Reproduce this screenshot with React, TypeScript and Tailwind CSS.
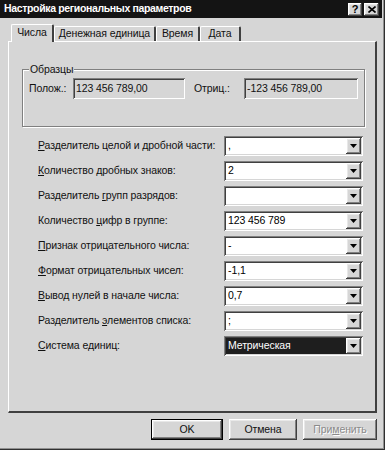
const raised =
  "shadow-[inset_-1px_-1px_0_#404040,inset_1px_1px_0_#ffffff,inset_-2px_-2px_0_#808080,inset_2px_2px_0_#e8e8e8]";
const sunken =
  "shadow-[inset_1px_1px_0_#808080,inset_-1px_-1px_0_#ffffff,inset_2px_2px_0_#404040,inset_-2px_-2px_0_#d6d6d6]";

type row = {
  pre: string;
  u: string;
  post: string;
  value: string;
  selected?: boolean;
};

const rows: row[] = [
  { pre: "", u: "Р", post: "азделитель целой и дробной части:", value: "," },
  { pre: "", u: "К", post: "оличество дробных знаков:", value: "2" },
  { pre: "Разделитель ", u: "г", post: "рупп разрядов:", value: "" },
  { pre: "Количество ", u: "ц", post: "ифр в группе:", value: "123 456 789" },
  { pre: "", u: "П", post: "ризнак отрицательного числа:", value: "-" },
  { pre: "", u: "Ф", post: "ормат отрицательных чисел:", value: "-1,1" },
  { pre: "", u: "В", post: "ывод нулей в начале числа:", value: "0,7" },
  { pre: "Разделитель ", u: "э", post: "лементов списка:", value: ";" },
  { pre: "", u: "С", post: "истема единиц:", value: "Метрическая", selected: true },
];

const tabs = [
  { name: "Денежная единица", w: "w-[102px]" },
  { name: "Время", w: "w-[44px]" },
  { name: "Дата", w: "w-[41px]" },
];

function Combo({ value, selected }: { value: string; selected?: boolean }) {
  return (
    <div className={`relative h-[20px] w-[139px] bg-white ${sunken} flex items-center p-[2px]`}>
      <div
        className={`flex-1 h-full flex items-center pl-[2px] ${
          selected ? "bg-[#1e1e1e] text-white" : "text-black"
        }`}
      >
        {value}
      </div>
      <div className={`w-[15px] h-full bg-[#d6d6d6] ${raised} flex items-center justify-center`}>
        <svg width="7" height="4" viewBox="0 0 7 4">
          <path d="M0 0h7L3.5 4z" fill="#000" />
        </svg>
      </div>
    </div>
  );
}

export default function App() {
  return (
    <div className="w-[385px] h-[450px] bg-[#d6d6d6] font-['Liberation_Sans',sans-serif] text-[10.5px] tracking-[-0.1px] text-[#111] flex flex-col shadow-[inset_-1px_-1px_0_#303030,inset_-2px_-2px_0_#909090] overflow-hidden">
      {/* title bar */}
      <div className="h-[18px] w-[382px] bg-[#141414] flex items-center pl-[4px] pr-[3px]">
        <span className="flex-1 text-white font-bold text-[10.5px] tracking-[-0.35px]">
          Настройка региональных параметров
        </span>
        <div className={`w-[14px] h-[13px] bg-[#d6d6d6] ${raised} flex items-center justify-center font-bold text-[11px] leading-none text-black`}>
          ?
        </div>
        <div className={`ml-[2px] w-[15px] h-[13px] bg-[#d6d6d6] ${raised} flex items-center justify-center`}>
          <svg width="8" height="7" viewBox="0 0 8 7">
            <path d="M0.5 0.5L7.5 6.5M7.5 0.5L0.5 6.5" stroke="#000" strokeWidth="1.6" />
          </svg>
        </div>
      </div>

      <div className="px-[8px] flex flex-col">
        {/* tabs */}
        <div className="flex items-end h-[23px] pl-[3px]">
          <div className="relative z-10 -mb-px h-[18px] w-[43px] bg-[#d6d6d6] border-t border-l border-white border-r-[2px] border-r-[#404040] rounded-t-[2px] flex items-center justify-center pb-[1px]">
            Числа
          </div>
          {tabs.map((t) => (
            <div
              key={t.name}
              className={`h-[15px] ${t.w} border-t border-l border-white border-r-[2px] border-r-[#404040] rounded-t-[2px] flex items-center justify-center`}
            >
              {t.name}
            </div>
          ))}
        </div>

        {/* panel */}
        <div className="h-[372px] w-[369px] border-t border-l border-white border-r-[2px] border-b-[2px] border-r-[#404040] border-b-[#404040] pt-[27px] pl-[13px]">
          {/* group box */}
          <div className="relative w-[343px] h-[58px] border border-[#808080] shadow-[1px_1px_0_#ffffff,inset_1px_1px_0_#ffffff]">
            <span className="absolute -top-[8px] left-[6px] bg-[#d6d6d6] px-[1px] leading-[14px]">
              Образцы
            </span>
            <div className="flex items-center pt-[8px] pl-[6px]">
              <span className="w-[44px]">Полож.:</span>
              <div className={`h-[21px] w-[112px] ${sunken} flex items-center pl-[3px]`}>
                123 456 789,00
              </div>
              <span className="ml-[9px] w-[50px]">Отриц.:</span>
              <div className={`h-[21px] w-[114px] ${sunken} flex items-center pl-[3px]`}>
                -123 456 789,00
              </div>
            </div>
          </div>

          {/* rows */}
          <div className="mt-[9px] pl-[16px] flex flex-col gap-[5px]">
            {rows.map((r) => (
              <div key={r.post} className="flex items-center h-[20px]">
                <span className="w-[186px] whitespace-nowrap">
                  {r.pre}
                  <span className="underline">{r.u}</span>
                  {r.post}
                </span>
                <Combo value={r.value} selected={r.selected} />
              </div>
            ))}
          </div>
        </div>

        {/* buttons */}
        <div className="flex justify-end gap-[6px] mt-[6px]">
          <div className="h-[21px] w-[72px] border border-black">
            <div className={`h-full w-full ${raised} flex items-center justify-center`}>OK</div>
          </div>
          <div className={`h-[21px] w-[68px] ${raised} flex items-center justify-center`}>Отмена</div>
          <div className={`h-[21px] w-[74px] ${raised} flex items-center justify-center text-[#8a8a8a] [text-shadow:1px_1px_0_#ffffff]`}>
            При<span className="underline">м</span>енить
          </div>
        </div>
      </div>
    </div>
  );
}
